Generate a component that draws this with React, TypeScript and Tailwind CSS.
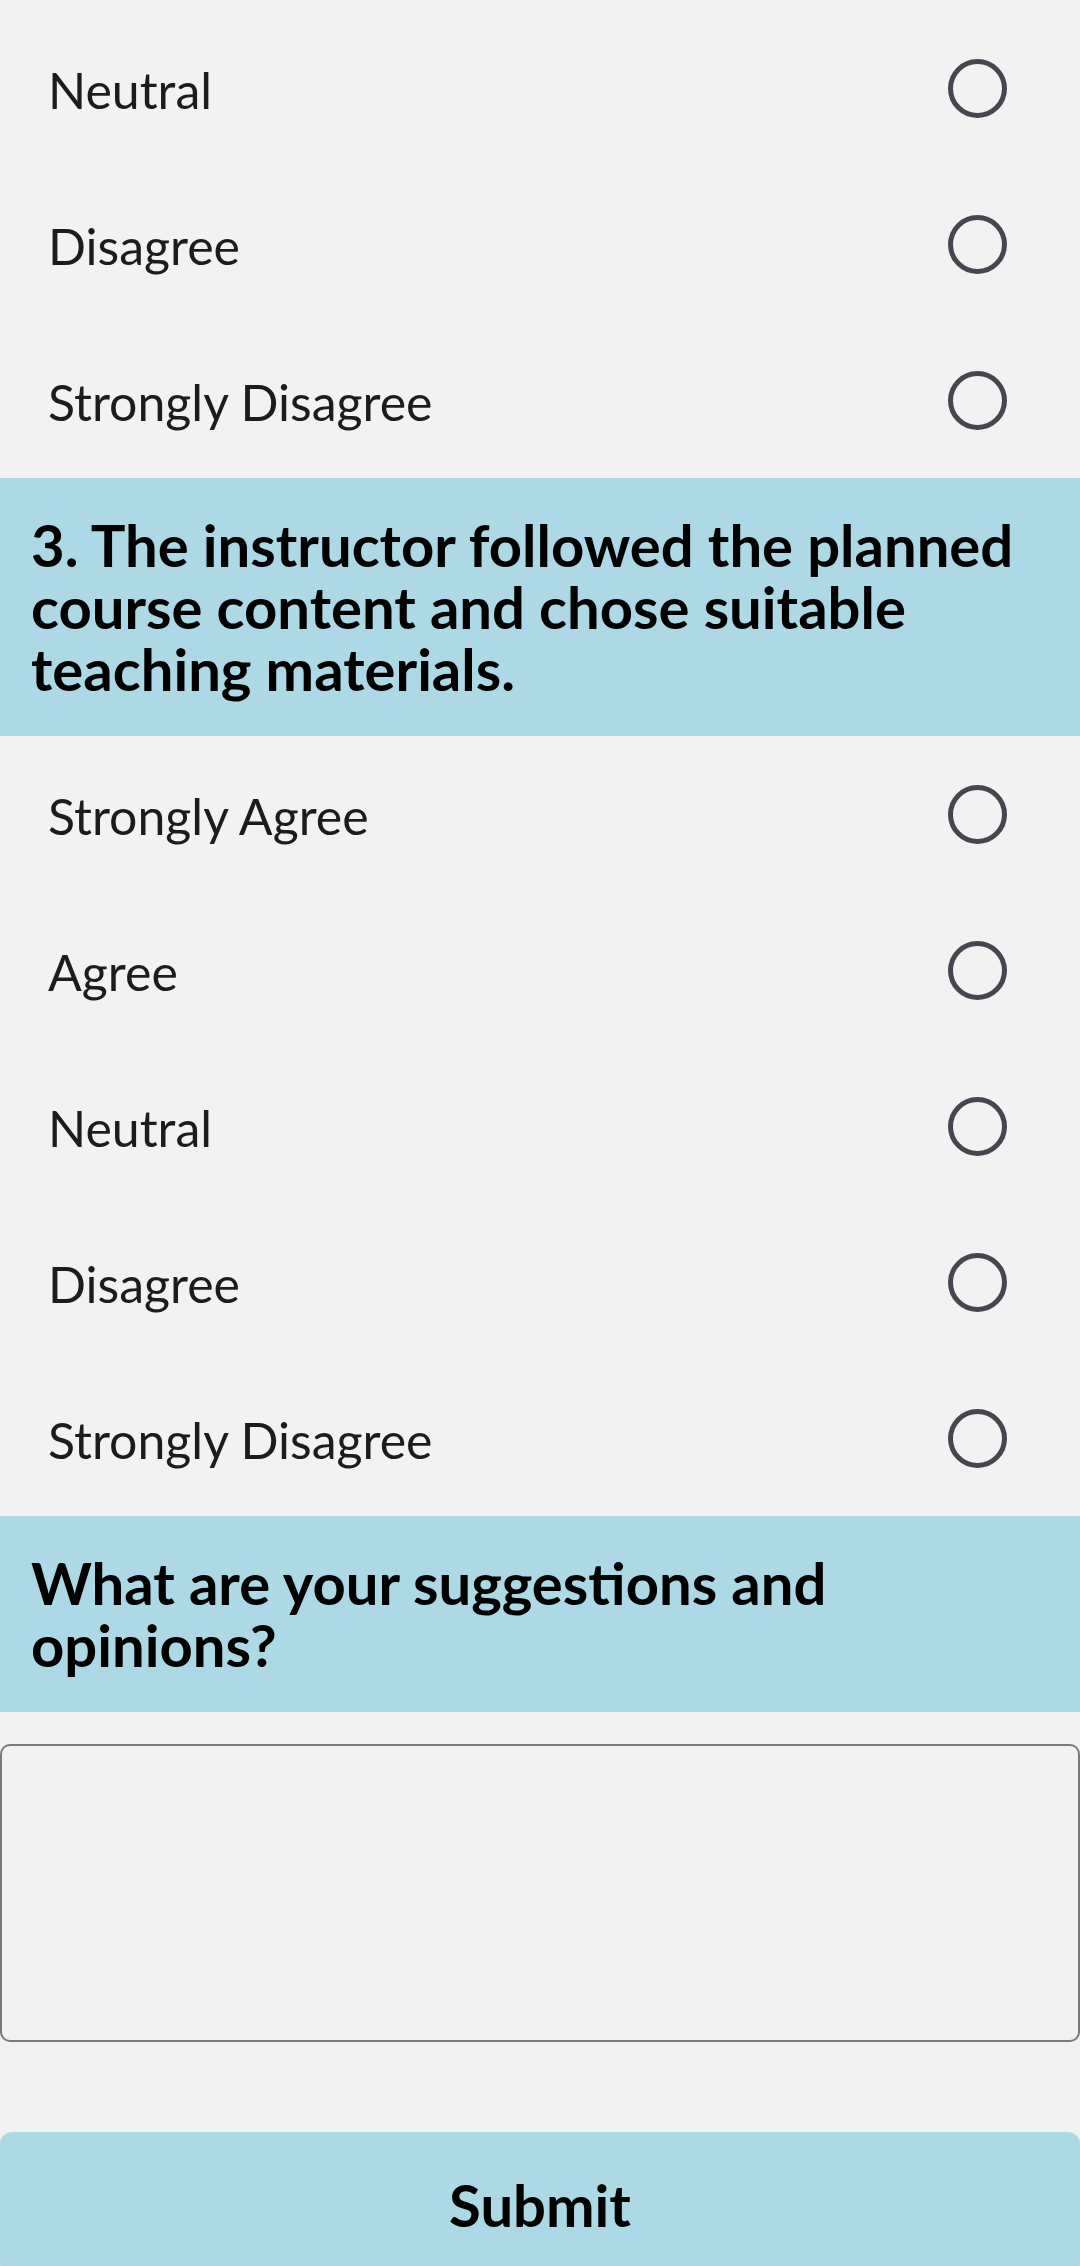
import React from "react";

const OPTS_A = ["Neutral", "Disagree", "Strongly Disagree"];
const OPTS_B = ["Strongly Agree", "Agree", "Neutral", "Disagree", "Strongly Disagree"];

function Row({ label }: { label: string }) {
  return (
    <label className="flex h-[156px] items-center justify-between pl-[48px] pr-[73px]">
      <span className="pt-[4px] text-[50px] leading-none text-[#1c1b1f]">{label}</span>
      <span className="block h-[59px] w-[59px] rounded-full border-[5.5px] border-[#49454f]" />
    </label>
  );
}

function Header({ children }: { children: React.ReactNode }) {
  return (
    <div className="bg-[#add8e6] px-[31px] py-[36px] text-[58px] font-bold leading-[62px] text-black">
      {children}
    </div>
  );
}

export default function App() {
  return (
    <div
      className="min-h-screen bg-[#f2f2f2]"
      style={{ fontFamily: "Lato, 'Noto Sans', sans-serif" }}
    >
      <div className="pt-[10px]">
        {OPTS_A.map((o) => (
          <Row key={"a" + o} label={o} />
        ))}
      </div>
      <Header>3. The instructor followed the planned course content and chose suitable teaching materials.</Header>
      <div>
        {OPTS_B.map((o) => (
          <Row key={"b" + o} label={o} />
        ))}
      </div>
      <Header>What are your suggestions and opinions?</Header>
      <div className="pt-[32px]">
        <textarea className="block h-[298px] w-full resize-none rounded-[10px] border-2 border-[#7a7a7a] bg-transparent p-4 text-[40px] outline-none" />
      </div>
      <div className="pt-[90px]">
        <button className="flex h-[144px] w-full items-center justify-center rounded-[12px] bg-[#add8e6] text-[58px] font-bold text-black">
          Submit
        </button>
      </div>
    </div>
  );
}
